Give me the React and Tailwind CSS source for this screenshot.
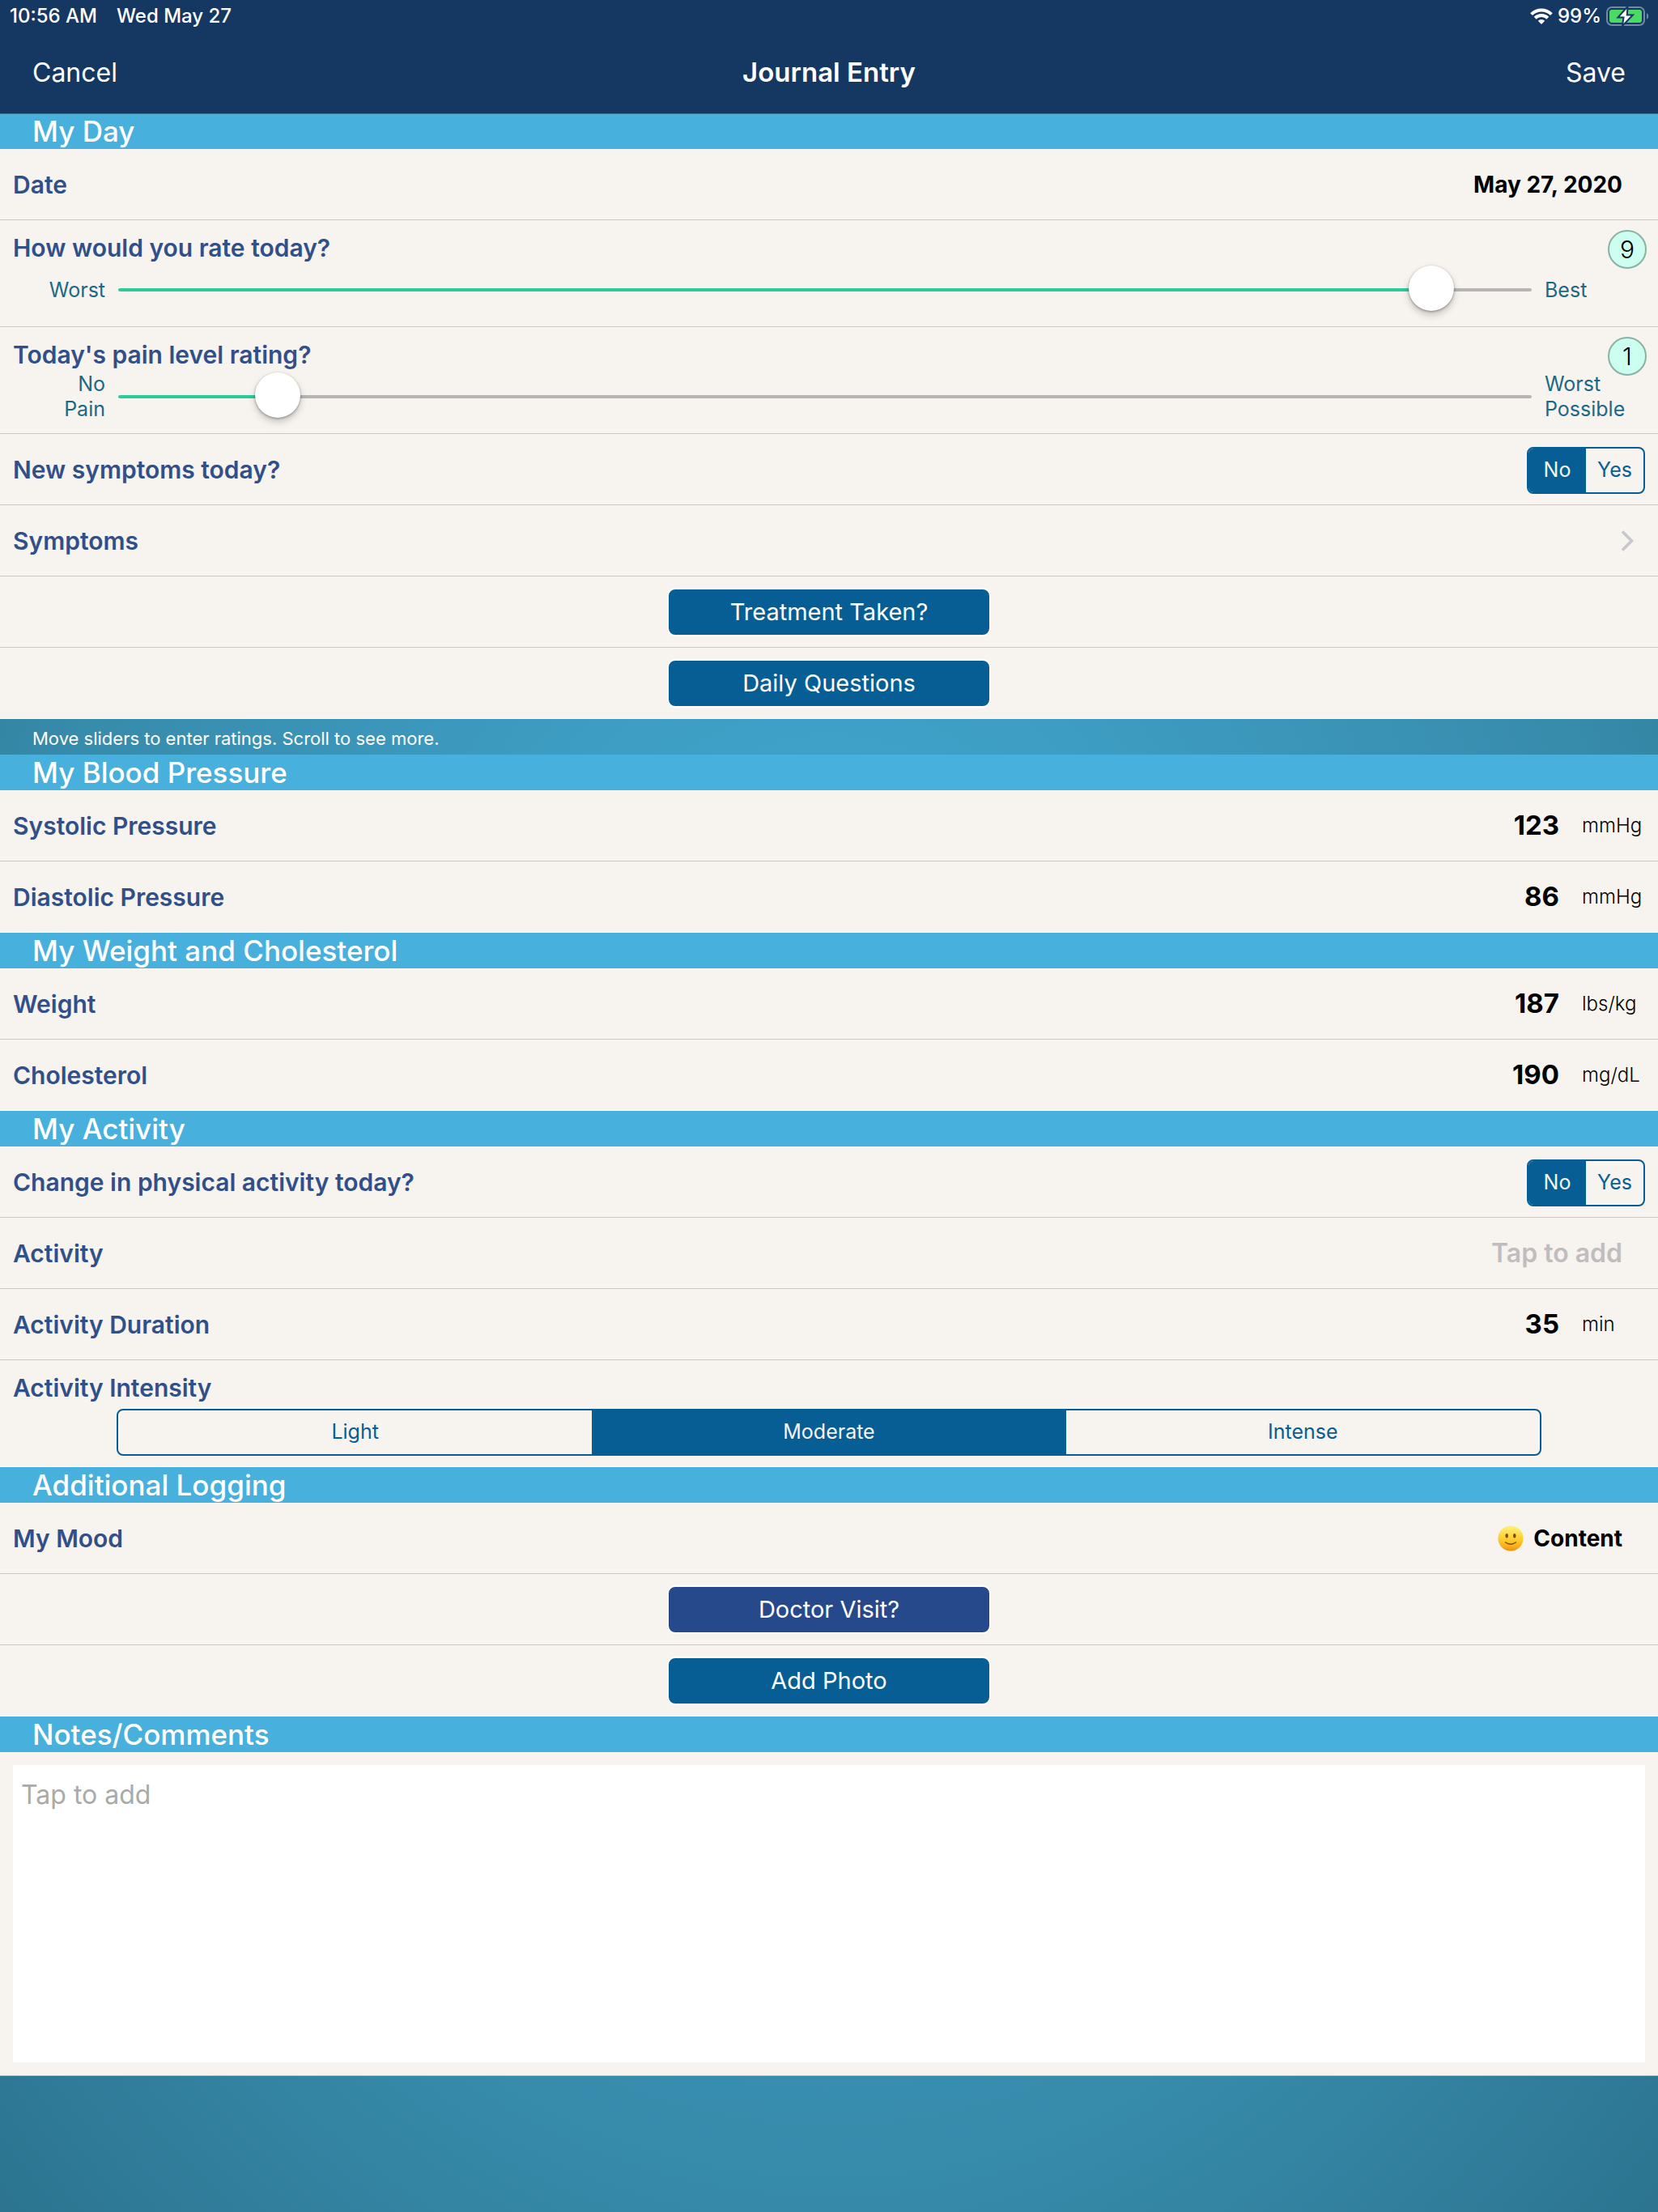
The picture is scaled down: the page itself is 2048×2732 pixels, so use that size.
import { useState } from 'react'
import clsx from 'clsx'

function WifiIcon() {
  return (
    <svg viewBox="0 0 28 20" className="w-7 h-5" aria-hidden="true">
      <g fill="none" stroke="#fff" strokeWidth="4">
        <path d="M1.6 7.6a17.6 17.6 0 0 1 24.8 0" />
        <path d="M6.2 12.2a11.2 11.2 0 0 1 15.6 0" />
      </g>
      <path d="M14 20l-4.2-4.3a6 6 0 0 1 8.4 0z" fill="#fff" />
    </svg>
  )
}

function BatteryIcon() {
  return (
    <svg viewBox="0 0 54 24" className="w-[54px] h-6" aria-hidden="true">
      <rect x="1" y="1" width="46" height="22" rx="6" fill="none" stroke="#7388a3" strokeWidth="2" />
      <rect x="4" y="4" width="40" height="16" rx="3" fill="#4cd964" />
      <path d="M50 8a4.6 4.6 0 0 1 0 8z" fill="#7388a3" />
      <path d="M26.5 0L14.5 13.5h7L20 24 33 10.5h-7.2z" fill="#fff" stroke="#143862" strokeWidth="2" />
    </svg>
  )
}

function ChevronIcon() {
  return (
    <svg viewBox="0 0 16 26" className="w-4 h-[26px]" aria-hidden="true">
      <path d="M2 1.5L13.5 13 2 24.5" fill="none" stroke="#c7c7cc" strokeWidth="3.6" />
    </svg>
  )
}

function SmileIcon() {
  return (
    <svg viewBox="0 0 32 32" className="w-8 h-8" aria-hidden="true">
      <defs>
        <linearGradient id="face" x1="0" y1="0" x2="0" y2="1">
          <stop offset="0" stopColor="#fff27a" />
          <stop offset="0.5" stopColor="#fdd033" />
          <stop offset="0.8" stopColor="#fcb21f" />
          <stop offset="1" stopColor="#ee8d12" />
        </linearGradient>
      </defs>
      <circle cx="16" cy="16" r="15.6" fill="url(#face)" />
      <ellipse cx="11.2" cy="12.8" rx="1.8" ry="2.8" fill="#7a4b0c" />
      <ellipse cx="20.8" cy="12.8" rx="1.8" ry="2.8" fill="#7a4b0c" />
      <path d="M9.6 21q6.4 4.6 12.8 0" fill="none" stroke="#7a4b0c" strokeWidth="1.4" strokeLinecap="round" />
    </svg>
  )
}

function Section({ title, first, children }) {
  return (
    <section>
      <h2 className={clsx('h-11 flex items-center pl-10 bg-[#47b0dc] text-white text-[35px] font-medium', first && 'border-t border-[#3a7d9b]')}>{title}</h2>
      <div className="bg-[#f7f3ee]">{children}</div>
    </section>
  )
}

const labelClass = 'text-[30px] leading-9 font-semibold text-[#314f88]'
const rowClass = 'border-b border-[#c8c7cc] last:border-white'

function Row({ label, htmlFor, children }) {
  return (
    <div className={`h-[88px] flex items-center justify-between pl-4 ${rowClass}`}>
      {htmlFor ? <label htmlFor={htmlFor} className={labelClass}>{label}</label> : <span className={labelClass}>{label}</span>}
      {children}
    </div>
  )
}

function RatingRow({ id, label, low, high, initial }) {
  const [value, setValue] = useState(initial)
  const fill = `linear-gradient(to right, #2bcb9a ${value * 10}%, #b5b5b5 ${value * 10}%)`

  return (
    <div className={`relative h-[132px] pt-4 ${rowClass}`}>
      <label htmlFor={id} className={`block pl-4 ${labelClass}`}>{label}</label>
      <output htmlFor={id} className="absolute top-3 right-3.5 w-12 h-12 rounded-full border-2 border-[#88b3a5] bg-[#ccffef] flex items-center justify-center text-[30px] font-light text-black">
        {Math.floor(value)}
      </output>
      <div className="h-[68px] flex items-center gap-4 text-[25px] leading-[31px] text-[#1b6987]">
        <span className="w-20 ml-[50px] text-right">{low}</span>
        <input
          id={id}
          type="range"
          min="0"
          max="10"
          step="any"
          value={value}
          onChange={e => setValue(Number(e.target.value))}
          style={{ '--fill': fill }}
          className="flex-1 min-w-0 h-14 appearance-none bg-transparent [&::-webkit-slider-runnable-track]:h-1 [&::-webkit-slider-runnable-track]:rounded-full [&::-webkit-slider-runnable-track]:bg-[image:var(--fill)] [&::-webkit-slider-thumb]:appearance-none [&::-webkit-slider-thumb]:w-14 [&::-webkit-slider-thumb]:h-14 [&::-webkit-slider-thumb]:-mt-7 [&::-webkit-slider-thumb]:rounded-full [&::-webkit-slider-thumb]:bg-white [&::-webkit-slider-thumb]:shadow-[0_5px_10px_rgba(0,0,0,0.2),0_1px_3px_rgba(0,0,0,0.35)]"
        />
        <span className="w-28 mr-7">{high}</span>
      </div>
    </div>
  )
}

function Segmented({ name, label, options, initial, className }) {
  const [selected, setSelected] = useState(initial)

  return (
    <div role="radiogroup" aria-label={label} className={clsx('flex h-[58px] rounded-lg border-2 border-[#075e94] overflow-hidden', className)}>
      {options.map(option => (
        <label key={option} className={clsx('relative flex-1 flex items-center justify-center text-[25px]', selected === option ? 'bg-[#075e94] text-[#f7f3ee]' : 'text-[#075e94]')}>
          <input type="radio" name={name} value={option} checked={selected === option} onChange={() => setSelected(option)} className="sr-only" />
          {option}
        </label>
      ))}
    </div>
  )
}

function MeasureRow({ id, label, value, unit }) {
  return (
    <Row label={label} htmlFor={id}>
      <div className="flex items-center">
        <input id={id} type="text" inputMode="numeric" defaultValue={value} className="w-40 bg-transparent text-right text-[33px] font-bold text-black" />
        <span className="w-[94px] ml-7 text-2xl font-light text-black">{unit}</span>
      </div>
    </Row>
  )
}

function ActionRow({ children, className = 'bg-[#075e94]' }) {
  return (
    <div className={`h-[88px] flex items-center justify-center ${rowClass}`}>
      <button type="button" className={`w-[400px] h-[60px] rounded-[10px] border-2 border-white text-white text-[29px] ${className}`}>{children}</button>
    </div>
  )
}

export default function App() {
  return (
    <div className="min-h-screen flex flex-col font-['Inter',sans-serif] bg-[radial-gradient(ellipse_at_center,#43acd6_0%,#378bab_68%,#2c7490_100%)]">
      <header className="bg-[#143862] text-white">
        <div className="h-10 flex items-center justify-between pl-3 pr-2.5 text-2xl font-medium">
          <div className="flex gap-6">
            <span>10:56 AM</span>
            <span>Wed May 27</span>
          </div>
          <div className="flex items-center gap-1.5">
            <WifiIcon />
            <span>99%</span>
            <BatteryIcon />
          </div>
        </div>
        <nav className="h-[100px] flex items-center px-10 text-[32px]">
          <div className="flex-1">
            <button type="button">Cancel</button>
          </div>
          <h1 className="text-[33px] font-semibold">Journal Entry</h1>
          <div className="flex-1 text-right">
            <button type="button">Save</button>
          </div>
        </nav>
      </header>

      <main>
        <Section title="My Day" first>
          <Row label="Date">
            <button type="button" className="mr-11 text-[28px] font-bold text-black">May 27, 2020</button>
          </Row>
          <RatingRow id="day-rating" label="How would you rate today?" low="Worst" high="Best" initial={9.43} />
          <RatingRow id="pain-rating" label="Today's pain level rating?" low="No Pain" high="Worst Possible" initial={1} />
          <Row label="New symptoms today?">
            <Segmented name="new-symptoms" label="New symptoms today?" options={['No', 'Yes']} initial="No" className="w-[146px] mt-0.5 mr-4" />
          </Row>
          <button type="button" className={`w-full h-[88px] flex items-center justify-between pl-4 pr-[30px] ${rowClass} ${labelClass}`}>
            Symptoms
            <ChevronIcon />
          </button>
          <ActionRow>Treatment Taken?</ActionRow>
          <ActionRow>Daily Questions</ActionRow>
        </Section>
        <p className="h-11 pt-1 pl-10 text-[22px] leading-10 text-white">Move sliders to enter ratings. Scroll to see more.</p>

        <Section title="My Blood Pressure">
          <MeasureRow id="systolic" label="Systolic Pressure" value="123" unit="mmHg" />
          <MeasureRow id="diastolic" label="Diastolic Pressure" value="86" unit="mmHg" />
        </Section>

        <Section title="My Weight and Cholesterol">
          <MeasureRow id="weight" label="Weight" value="187" unit="lbs/kg" />
          <MeasureRow id="cholesterol" label="Cholesterol" value="190" unit="mg/dL" />
        </Section>

        <Section title="My Activity">
          <Row label="Change in physical activity today?">
            <Segmented name="activity-change" label="Change in physical activity today?" options={['No', 'Yes']} initial="No" className="w-[146px] mt-0.5 mr-4" />
          </Row>
          <Row label="Activity" htmlFor="activity">
            <input id="activity" type="text" placeholder="Tap to add" className="w-96 mr-11 bg-transparent text-right text-[32px] font-semibold text-black placeholder:text-[#c1bdbe]" />
          </Row>
          <MeasureRow id="duration" label="Activity Duration" value="35" unit="min" />
          <div className={`h-[132px] pt-4 ${rowClass}`}>
            <div className={`pl-4 ${labelClass}`}>Activity Intensity</div>
            <Segmented name="intensity" label="Activity Intensity" options={['Light', 'Moderate', 'Intense']} initial="Moderate" className="mt-2 mx-36" />
          </div>
        </Section>

        <Section title="Additional Logging">
          <Row label="My Mood">
            <button type="button" className="mr-11 flex items-center gap-3 text-[28px] font-bold text-black">
              <SmileIcon />
              Content
            </button>
          </Row>
          <ActionRow className="bg-[#26498b]">Doctor Visit?</ActionRow>
          <ActionRow>Add Photo</ActionRow>
        </Section>

        <Section title="Notes/Comments">
          <div className="p-4 border-b border-[#c8c7cc]">
            <textarea aria-label="Notes/Comments" placeholder="Tap to add" className="block w-full h-[367px] resize-none bg-white px-2.5 py-4 text-[32px] leading-[42px] text-black placeholder:text-[#aaa]" />
          </div>
        </Section>
      </main>
    </div>
  )
}
